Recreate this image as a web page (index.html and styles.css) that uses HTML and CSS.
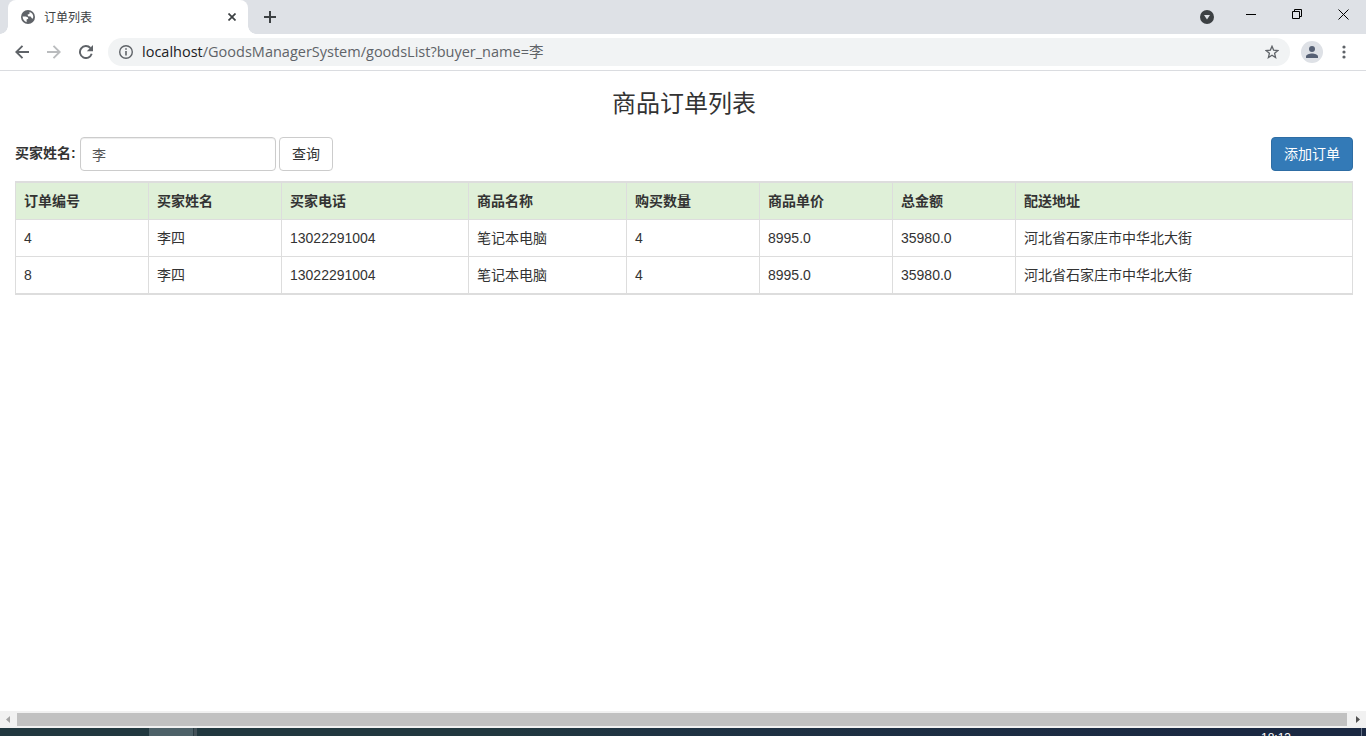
FILE: index.html
```html
<!DOCTYPE html>
<html lang="zh-CN">
<head>
    <meta charset="UTF-8">
    <title>订单列表</title>
    <link rel="stylesheet" href="styles.css">
</head>
<body>
    <div class="tabstrip">
        <div class="tab">
            <svg class="globe" width="14" height="14" viewBox="0 0 14 14">
                <circle cx="7" cy="7" r="7" fill="#5f6368"/>
                <path d="M1.6 6.6 L4.8 6.6 Q7.4 6.8 7.3 8.8 L5.6 9.6 L5.6 12.2 Q1.8 10.8 1.6 6.6 Z M8.6 1.9 Q12.2 3 12.3 7 Q12 8.4 11.2 8.8 L9.6 6.6 L7 6.2 L6.6 4.6 L8.4 4 Z" fill="#fff"/>
            </svg>
            <span class="tab-title">订单列表</span>
            <svg class="tab-close" width="8" height="8" viewBox="0 0 8 8">
                <path d="M0.5 0.5 L7.5 7.5 M7.5 0.5 L0.5 7.5" stroke="#3c4043" stroke-width="1.7"/>
            </svg>
        </div>
        <svg class="new-tab" width="12" height="12" viewBox="0 0 12 12">
            <path d="M6 0 V12 M0 6 H12" stroke="#3c4043" stroke-width="2"/>
        </svg>
        <div class="window-buttons">
            <svg width="14" height="14" viewBox="0 0 14 14">
                <circle cx="7" cy="7" r="7" fill="#3c4043"/>
                <path d="M4 5 H10 L7 9.5 Z" fill="#dee1e6"/>
            </svg>
            <svg class="minimize" width="10" height="10" viewBox="0 0 10 10">
                <path d="M0 5.5 H10" stroke="#000"/>
            </svg>
            <svg class="restore" width="10" height="10" viewBox="0 0 10 10">
                <path d="M0.5 2.5 H7.5 V9.5 H0.5 Z M2.5 2.5 V0.5 H9.5 V7.5 H7.5" fill="none" stroke="#000"/>
            </svg>
            <svg class="close" width="11" height="11" viewBox="0 0 11 11">
                <path d="M0.5 0.5 L10.5 10.5 M10.5 0.5 L0.5 10.5" stroke="#000"/>
            </svg>
        </div>
    </div>

    <div class="toolbar">
        <svg width="14" height="14" viewBox="0 0 14 14">
            <path d="M14 7 H1.5 M7.5 0.8 L1.3 7 L7.5 13.2" fill="none" stroke="#5f6368" stroke-width="1.9"/>
        </svg>
        <svg class="forward" width="14" height="14" viewBox="0 0 14 14">
            <path d="M0 7 H12.5 M6.5 0.8 L12.7 7 L6.5 13.2" fill="none" stroke="#babcbe" stroke-width="1.9"/>
        </svg>
        <svg class="reload" width="14" height="14" viewBox="0 0 14 14">
            <path d="M12.7 8.8 A6 6 0 1 1 11.4 3" fill="none" stroke="#5f6368" stroke-width="1.9"/>
            <path d="M14 0 V6.2 H7.8 Z" fill="#5f6368"/>
        </svg>
        <div class="address">
            <svg width="14" height="14" viewBox="0 0 14 14">
                <circle cx="7" cy="7" r="6.3" fill="none" stroke="#5f6368" stroke-width="1.4"/>
                <path d="M7 3.3 V4.8 M7 6 V10.6" stroke="#5f6368" stroke-width="1.6"/>
            </svg>
            <span class="url"><span class="host">localhost</span>/GoodsManagerSystem/goodsList?buyer_name=李</span>
            <svg class="star" width="14" height="14" viewBox="0 0 14 14">
                <path d="M7 1.3 L8.6 5.1 L12.9 5.5 L9.6 8.3 L10.6 12.5 L7 10.2 L3.4 12.5 L4.4 8.3 L1.1 5.5 L5.4 5.1 Z" fill="none" stroke="#5f6368" stroke-width="1.3"/>
            </svg>
        </div>
        <div class="avatar">
            <svg width="12" height="12" viewBox="0 0 12 12">
                <circle cx="6" cy="3" r="3" fill="#566074"/>
                <path d="M0 12 V10.3 C0 8.4 3.5 7.4 6 7.4 S12 8.4 12 10.3 V12 Z" fill="#566074"/>
            </svg>
        </div>
        <svg class="menu" width="4" height="14" viewBox="0 0 4 14">
            <circle cx="2" cy="2" r="1.6" fill="#5f6368"/>
            <circle cx="2" cy="7" r="1.6" fill="#5f6368"/>
            <circle cx="2" cy="12" r="1.6" fill="#5f6368"/>
        </svg>
    </div>

    <div class="container">
        <h3>商品订单列表</h3>
        <form class="search">
            <label for="buyer_name">买家姓名:</label>
            <input type="text" id="buyer_name" name="buyer_name" value="李">
            <button type="submit" class="btn">查询</button>
            <a class="btn btn-primary">添加订单</a>
        </form>
        <table class="orders">
            <colgroup>
                <col class="col-id"><col class="col-name"><col class="col-phone"><col class="col-goods">
                <col class="col-num"><col class="col-price"><col class="col-total"><col>
            </colgroup>
            <thead>
                <tr>
                    <th>订单编号</th>
                    <th>买家姓名</th>
                    <th>买家电话</th>
                    <th>商品名称</th>
                    <th>购买数量</th>
                    <th>商品单价</th>
                    <th>总金额</th>
                    <th>配送地址</th>
                </tr>
            </thead>
            <tbody>
                <tr>
                    <td>4</td>
                    <td>李四</td>
                    <td>13022291004</td>
                    <td>笔记本电脑</td>
                    <td>4</td>
                    <td>8995.0</td>
                    <td>35980.0</td>
                    <td>河北省石家庄市中华北大街</td>
                </tr>
                <tr>
                    <td>8</td>
                    <td>李四</td>
                    <td>13022291004</td>
                    <td>笔记本电脑</td>
                    <td>4</td>
                    <td>8995.0</td>
                    <td>35980.0</td>
                    <td>河北省石家庄市中华北大街</td>
                </tr>
            </tbody>
        </table>
    </div>

    <div class="scrollbar">
        <svg width="17" height="17" viewBox="0 0 17 17">
            <path d="M10 5 V12 L6 8.5 Z" fill="#a3a3a3"/>
        </svg>
        <div class="thumb"></div>
        <svg width="19" height="17" viewBox="0 0 19 17">
            <path d="M9 5 V12 L13 8.5 Z" fill="#505050"/>
        </svg>
    </div>
    <div class="taskbar">
        <div class="task-active"></div>
        <div class="task-edge"></div>
        <div class="clock">18:13</div>
        <div class="show-desktop"></div>
    </div>
</body>
</html>
```

FILE: styles.css
```css
* {
    box-sizing: border-box;
}
body {
    margin: 0;
    height: 736px;
    overflow: hidden;
    display: flex;
    flex-direction: column;
    font-family: "Liberation Sans", "Noto Sans CJK SC", sans-serif;
    font-size: 14px;
    line-height: 20px;
    color: #333;
    background-color: #fff;
}
svg {
    display: block;
    flex: none;
}

/* browser window */
.tabstrip {
    display: flex;
    flex: none;
    height: 34px;
    padding-left: 8px;
    background-color: #dee1e6;
}
.tab {
    position: relative;
    display: flex;
    align-items: center;
    width: 240px;
    padding: 0 12px 0 13px;
    background-color: #fff;
    border-radius: 8px 8px 0 0;
}
.tab::before,
.tab::after {
    content: "";
    position: absolute;
    bottom: 0;
    width: 8px;
    height: 8px;
}
.tab::before {
    left: -8px;
    background: radial-gradient(circle at 0 0, #dee1e6 7.5px, #fff 8px);
}
.tab::after {
    right: -8px;
    background: radial-gradient(circle at 100% 0, #dee1e6 7.5px, #fff 8px);
}
.tab-title {
    margin-left: 9px;
    padding-top: 1px;
    font-size: 12px;
    color: #3c4043;
}
.tab-close {
    margin-left: auto;
}
.new-tab {
    margin: 11px 0 0 16px;
}
.window-buttons {
    display: flex;
    margin-left: auto;
    padding: 10px 17px 0 0;
}
.minimize {
    margin-left: 32px;
    margin-top: -1px;
}
.restore {
    margin-left: 36px;
    margin-top: -1px;
}
.close {
    margin-left: 36px;
    margin-top: -1px;
}
.toolbar {
    display: flex;
    align-items: center;
    flex: none;
    height: 37px;
    padding: 0 20px 0 15px;
    border-bottom: 1px solid #dadce0;
}
.forward {
    margin-left: 18px;
}
.reload {
    margin-left: 18px;
}
.address {
    display: flex;
    align-items: center;
    flex: 1;
    height: 28px;
    margin-left: 15px;
    padding: 0 11px;
    border-radius: 14px;
    background-color: #f1f3f4;
}
.url {
    margin-left: 9px;
    font-family: "Open Sans", "Noto Sans CJK SC", sans-serif;
    font-size: 14.5px;
    color: #5f6368;
    white-space: nowrap;
}
.host {
    color: #202124;
}
.star {
    margin-left: auto;
}
.avatar {
    display: flex;
    align-items: center;
    justify-content: center;
    width: 22px;
    height: 22px;
    margin-left: 11px;
    border-radius: 50%;
    background-color: #dee1e6;
}
.menu {
    margin-left: 19px;
}

/* page */
.container {
    flex: 1;
    padding: 0 13px 0 15px;
}
h3 {
    margin: 20px 0 20px;
    font-size: 24px;
    font-weight: 400;
    line-height: 26px;
    text-align: center;
}
.search {
    display: flex;
    height: 34px;
    margin: 0 0 10px;
}
label {
    width: 65px;
    padding-top: 6px;
    font-weight: bold;
    white-space: nowrap;
}
input[type="text"] {
    width: 196px;
    height: 34px;
    padding: 6px 12px 6px 11px;
    font: inherit;
    color: #555;
    border: 1px solid #ccc;
    border-radius: 4px;
    box-shadow: inset 0 1px 1px rgba(0, 0, 0, 0.075);
}
.btn {
    width: 54px;
    height: 34px;
    margin-left: 3px;
    padding: 6px 0;
    font: inherit;
    text-align: center;
    color: #333;
    background-color: #fff;
    border: 1px solid #ccc;
    border-radius: 4px;
    cursor: pointer;
}
.btn-primary {
    width: 82px;
    margin-left: auto;
    color: #fff;
    background-color: #337ab7;
    border-color: #2e6da4;
}
.orders {
    width: 100%;
    table-layout: fixed;
    border: 1px solid #ddd;
    border-collapse: separate;
    border-spacing: 0;
}
.orders th,
.orders td {
    height: 37px;
    padding: 8px;
    text-align: left;
    border-right: 1px solid #ddd;
    border-bottom: 1px solid #ddd;
}
.orders th {
    height: 38px;
    border-top: 1px solid #ddd;
    background-color: #dff0d8;
}
.orders th:last-child,
.orders td:last-child {
    border-right: none;
}
.col-id,
.col-name,
.col-num,
.col-price {
    width: 133px;
}
.col-phone {
    width: 187px;
}
.col-goods {
    width: 158px;
}
.col-total {
    width: 123px;
}

/* scrollbar and taskbar */
.scrollbar {
    display: flex;
    flex: none;
    height: 17px;
    background-color: #f1f1f1;
}
.thumb {
    flex: 1;
    margin: 2px 0;
    background-color: #c1c1c1;
}
.taskbar {
    display: flex;
    flex: none;
    height: 8px;
    overflow: hidden;
    background: linear-gradient(to right, #21383f 0, #21383f 500px, #1f3343 650px, #1a2842 1250px);
}
.task-active {
    width: 44px;
    margin-left: 149px;
    background-color: #4d6168;
}
.task-edge {
    width: 4px;
    background-color: #435158;
    border-left: 1px solid #2b3d44;
}
.clock {
    margin-left: auto;
    margin-right: 70px;
    padding-top: 3px;
    font-size: 12px;
    line-height: 14px;
    color: #fff;
}
.show-desktop {
    width: 5px;
    border-left: 1px solid #69758a;
}
```
